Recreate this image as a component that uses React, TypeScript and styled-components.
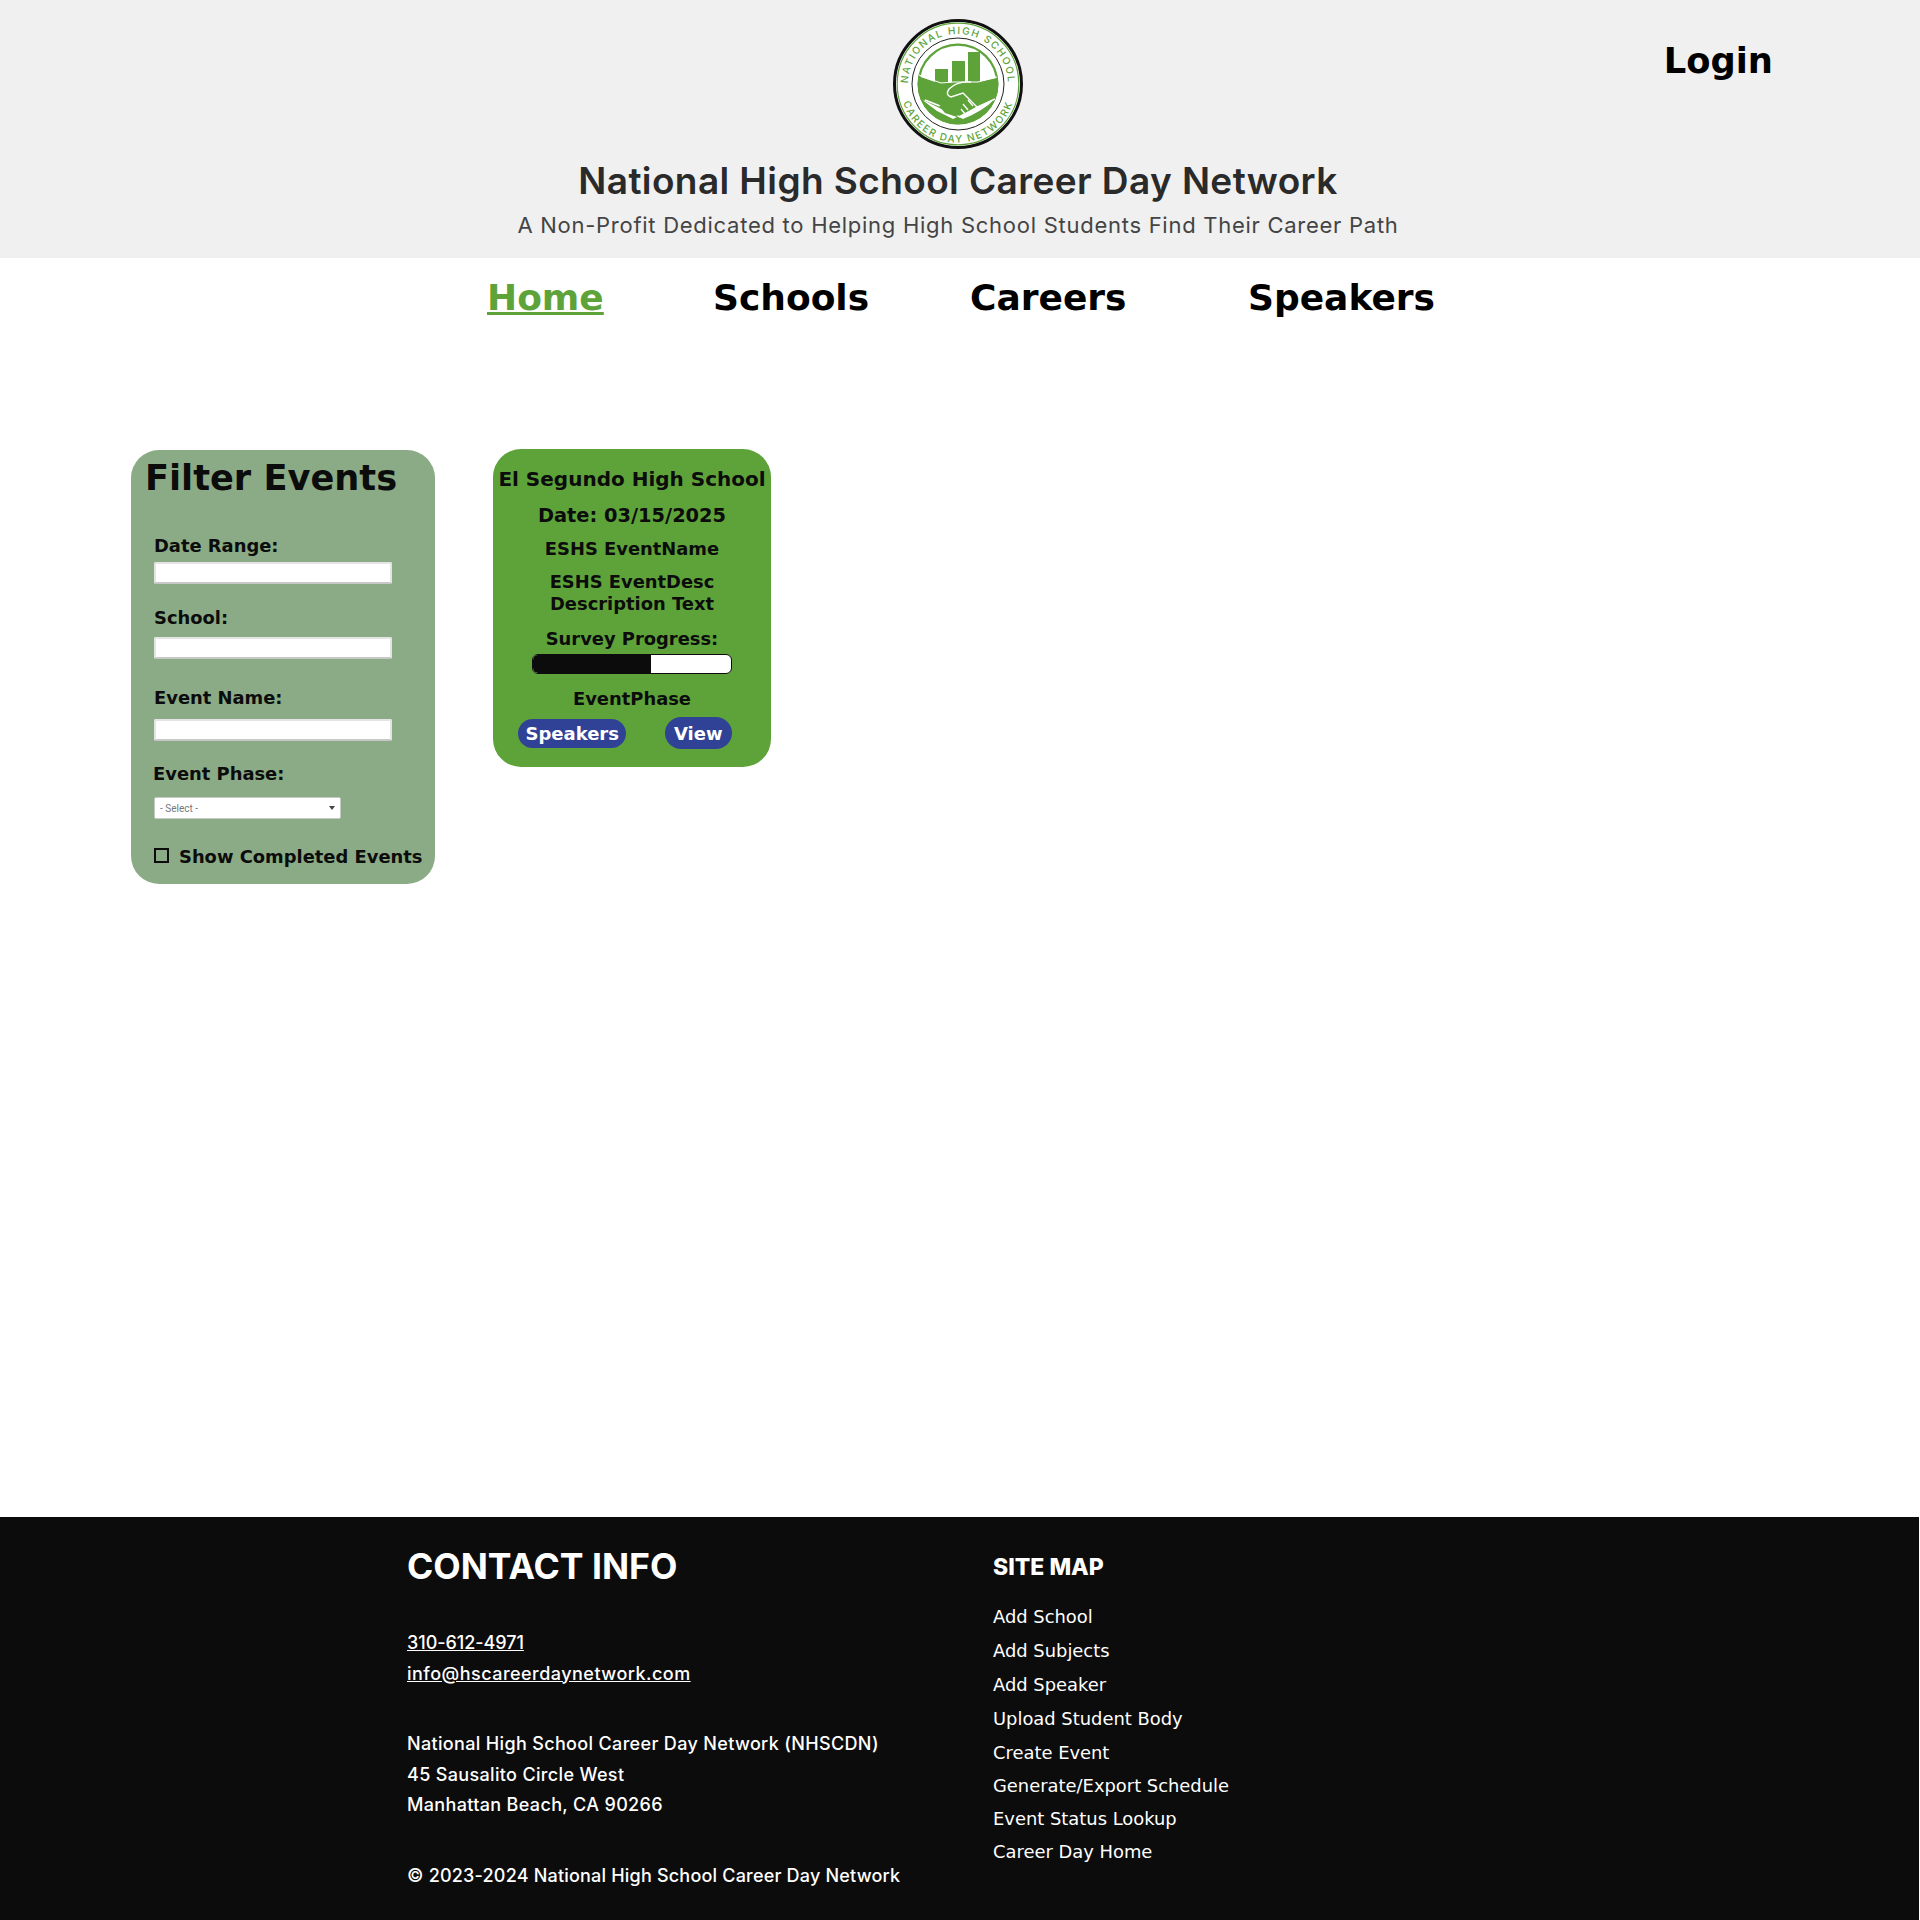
import React from 'react';
import styled, { createGlobalStyle } from 'styled-components';

const Colors = {
  ink: '#0c0c0c',
  green: '#5ea33a',
  sage: '#8aab85',
  blue: '#304295',
  header: '#f0f0f0',
};

const display = '"DejaVu Sans", sans-serif';
const footerFont = 'Inter, "Noto Sans", sans-serif';

const GlobalStyle = createGlobalStyle`
  html, body {
    margin: 0;
    padding: 0;
    background: #fff;
  }
`;

const Page = styled.div`
  display: flex;
  flex-direction: column;
  height: 1920px;
  font-family: ${display};
`;

const Header = styled.header`
  display: grid;
  grid-template-columns: 1fr auto 1fr;
  height: 258px;
  box-sizing: border-box;
  padding: 19px 4px 0 0;
  background: ${Colors.header};
`;

const Brand = styled.div`
  grid-column: 2;
  display: flex;
  flex-direction: column;
  align-items: center;
  color: #2a2a2a;
  font-family: ${footerFont};
`;

const BrandTitle = styled.div`
  margin-top: 9px;
  font-size: 37px;
  line-height: 46px;
  font-weight: 600;
  letter-spacing: 0.4px;
  white-space: nowrap;
`;

const BrandTagline = styled.div`
  margin-top: 6px;
  font-size: 22px;
  line-height: 30px;
  color: #444;
  letter-spacing: 0.73px;
  white-space: nowrap;
`;

const LoginLink = styled.a`
  justify-self: end;
  margin: 20px 143px 0 0;
  font-size: 35.3px;
  line-height: 44px;
  font-weight: 700;
  color: #000;
`;

const Nav = styled.nav`
  display: grid;
  grid-template-columns: 226px 257px 278px auto;
  padding: 18px 0 0 487px;
`;

const NavLink = styled.a<{ $active?: boolean }>`
  font-size: 36px;
  line-height: 44px;
  font-weight: 700;
  color: ${(p) => (p.$active ? Colors.green : '#000')};
  text-decoration: ${(p) => (p.$active ? 'underline' : 'none')};
`;

const Main = styled.main`
  display: flex;
  align-items: flex-start;
  gap: 58px;
  padding: 130px 0 0 131px;
  color: ${Colors.ink};
`;

const FilterPanel = styled.aside`
  width: 304px;
  height: 434px;
  box-sizing: border-box;
  padding: 7px 0 0 14px;
  border-radius: 28px;
  background: ${Colors.sage};
`;

const FilterTitle = styled.h2`
  margin: 0 0 37px;
  font-size: 35.2px;
  line-height: 42px;
  font-weight: 700;
`;

const Field = styled.div<{ $top: number; $gap: number; $indent?: number }>`
  display: flex;
  flex-direction: column;
  align-items: flex-start;
  gap: ${(p) => p.$gap}px;
  margin: ${(p) => p.$top}px 0 0 ${(p) => p.$indent ?? 9}px;
`;

const FieldLabel = styled.label`
  font-size: 17.9px;
  line-height: 20px;
  font-weight: 700;
`;

const TextInput = styled.input`
  display: block;
  width: 238px;
  height: 22px;
  box-sizing: border-box;
  padding: 0;
  border: 2px solid #e4e4e4;
  border-bottom-color: #c8c8c8;
  border-radius: 2px;
  background: #fff;
`;

const SelectBox = styled.div`
  display: flex;
  align-items: center;
  justify-content: space-between;
  width: 187px;
  height: 22px;
  margin-left: 1px;
  box-sizing: border-box;
  padding: 0 5px;
  border: 1px solid #c8c8c8;
  border-radius: 2px;
  background: #fff;
  color: #777;
  font-family: Roboto, sans-serif;
  font-size: 10px;

  &::after {
    content: '';
    border-left: 3px solid transparent;
    border-right: 3px solid transparent;
    border-top: 4px solid #444;
  }
`;

const CheckRow = styled.div`
  display: flex;
  align-items: center;
  gap: 10px;
  margin: 28px 0 0 9px;
  font-size: 17.9px;
  line-height: 20px;
  font-weight: 700;
  white-space: nowrap;
`;

const CheckBox = styled.span`
  width: 15px;
  height: 15px;
  margin-bottom: 3px;
  box-sizing: border-box;
  border: 2px solid ${Colors.ink};
`;

const EventCard = styled.article`
  display: flex;
  flex-direction: column;
  align-items: center;
  width: 278px;
  height: 318px;
  box-sizing: border-box;
  margin-top: -1px;
  padding-top: 16px;
  border-radius: 28px;
  background: ${Colors.green};
  text-align: center;
  font-weight: 700;
`;

const CardTitle = styled.h3`
  margin: 0;
  font-size: 20px;
  line-height: 28px;
  font-weight: 700;
  white-space: nowrap;
`;

const CardLine = styled.div<{ $top: number; $size?: number }>`
  margin-top: ${(p) => p.$top}px;
  font-size: ${(p) => p.$size || 17.9}px;
  line-height: 22px;
`;

const ProgressTrack = styled.div`
  width: 200px;
  height: 20px;
  box-sizing: border-box;
  margin-top: 4px;
  overflow: hidden;
  border: 1px solid ${Colors.ink};
  border-radius: 6px;
  background: #fff;
`;

const ProgressFill = styled.div`
  height: 100%;
  background: ${Colors.ink};
`;

const CardActions = styled.div`
  display: flex;
  align-items: center;
  gap: 39px;
  margin: 7px 14px 0 0;
`;

const PillButton = styled.button<{ $tall?: boolean }>`
  height: ${(p) => (p.$tall ? 32 : 29)}px;
  padding: 0 ${(p) => (p.$tall ? 9 : 7)}px;
  border: 0;
  border-radius: 16px;
  background: ${Colors.blue};
  color: #fff;
  font-family: ${display};
  font-size: 18px;
  font-weight: 700;
`;

const Footer = styled.footer`
  display: grid;
  grid-template-columns: 586px auto;
  height: 403px;
  box-sizing: border-box;
  margin: auto 1px 0 0;
  padding: 20px 0 0 407px;
  background: ${Colors.ink};
  color: #fff;
  font-family: ${footerFont};
`;

const ContactTitle = styled.h2`
  margin: 0;
  font-size: 35.6px;
  line-height: 60px;
  font-weight: 700;
`;

const ContactBlock = styled.div<{ $top: number; $spacing?: number }>`
  margin-top: ${(p) => p.$top}px;
  font-size: 18px;
  line-height: 30.5px;
  font-weight: 500;
  letter-spacing: ${(p) => p.$spacing ?? 0.34}px;
  white-space: nowrap;
`;

const ContactLink = styled.a<{ $spacing: number }>`
  display: block;
  color: #fff;
  letter-spacing: ${(p) => p.$spacing}px;
  text-decoration: underline;
`;

const SiteTitle = styled.h3`
  margin: 0 0 2px;
  font-size: 23px;
  line-height: 60px;
  font-weight: 800;
`;

const SiteList = styled.ul`
  margin: 0;
  padding: 0;
  list-style: none;
  font-family: ${display};
  font-size: 17.9px;
`;

const SiteItem = styled.li<{ $height: number }>`
  line-height: ${(p) => p.$height}px;
`;

const Logo = () => (
  <svg width="130" height="130" viewBox="0 0 130 130" role="img" aria-label="National High School Career Day Network">
    <defs>
      <path id="logo-top" d="M 15 65 A 50 50 0 0 1 115 65" />
      <path id="logo-bottom" d="M 7.5 66 A 57.5 57.5 0 0 0 122.5 66" />
      <clipPath id="logo-disk">
        <circle cx="65" cy="65" r="40.5" />
      </clipPath>
    </defs>
    <circle cx="65" cy="65" r="63.5" fill="#fff" stroke="#111" strokeWidth="3" />
    <circle cx="65" cy="65" r="60.8" fill="none" stroke="#5ea33a" strokeWidth="1.2" />
    <circle cx="65" cy="65" r="46" fill="none" stroke="#222" strokeWidth="1" />
    <g fill="#5ea33a" fontFamily="Inter, sans-serif" fontSize="10" fontWeight="500" letterSpacing="1.6">
      <text textAnchor="middle">
        <textPath href="#logo-top" startOffset="50%">NATIONAL HIGH SCHOOL</textPath>
      </text>
      <text textAnchor="middle">
        <textPath href="#logo-bottom" startOffset="50%">CAREER DAY NETWORK</textPath>
      </text>
    </g>
    <circle cx="65" cy="65" r="40.5" fill="#5ea33a" />
    <g clipPath="url(#logo-disk)">
      <path d="M 22 56 L 48 65 L 60 63 L 85 63 L 108 58 L 108 20 L 22 20 Z" fill="#fff" />
      <path d="M 28 80 Q 48 90 70 100 Q 90 92 102 80 L 76 92 L 60 100 L 44 92 Z" fill="#fff" />
      <circle cx="65" cy="65" r="39.5" fill="none" stroke="#5ea33a" strokeWidth="2.5" />
      <path d="M 42 50 H 55 V 66 H 42 Z M 59 42 H 72 V 66 H 59 Z M 75 33 H 87 V 66 H 75 Z" fill="#5ea33a" />
      <path d="M 26 56 L 48 64 L 60 63 L 85 63 L 104 58" fill="none" stroke="#fff" strokeWidth="1" />
      <path
        d="M 78 63 Q 64 62 56 70 Q 52 76 58 78 Q 64 76 70 74 L 84 88 M 32 81 L 47 87 L 67 98 L 84 88 L 102 80"
        fill="none"
        stroke="#fff"
        strokeWidth="1.4"
      />
      <path d="M 70 85 L 75 91 M 75 81 L 80 87 M 68 90 L 72 95" stroke="#fff" strokeWidth="1.3" />
      <path d="M 46 87 L 50 85 L 54 88 L 58 87 L 62 90 L 66 92 L 64 98 L 52 94 Z" fill="#5ea33a" />
    </g>
  </svg>
);

const siteLinks: [string, number][] = [
  ['Add School', 35],
  ['Add Subjects', 34],
  ['Add Speaker', 34],
  ['Upload Student Body', 34],
  ['Create Event', 33],
  ['Generate/Export Schedule', 33],
  ['Event Status Lookup', 33],
  ['Career Day Home', 34],
];

const App: React.FC = () => (
  <Page>
    <GlobalStyle />
    <Header>
      <Brand>
        <Logo />
        <BrandTitle>National High School Career Day Network</BrandTitle>
        <BrandTagline>A Non-Profit Dedicated to Helping High School Students Find Their Career Path</BrandTagline>
      </Brand>
      <LoginLink>Login</LoginLink>
    </Header>
    <Nav>
      <div><NavLink $active>Home</NavLink></div>
      <div><NavLink>Schools</NavLink></div>
      <div><NavLink>Careers</NavLink></div>
      <div><NavLink>Speakers</NavLink></div>
    </Nav>
    <Main>
      <FilterPanel>
        <FilterTitle>Filter Events</FilterTitle>
        <Field $top={0} $gap={6}>
          <FieldLabel>Date Range:</FieldLabel>
          <TextInput />
        </Field>
        <Field $top={24} $gap={9}>
          <FieldLabel>School:</FieldLabel>
          <TextInput />
        </Field>
        <Field $top={29} $gap={11}>
          <FieldLabel>Event Name:</FieldLabel>
          <TextInput />
        </Field>
        <Field $top={23} $gap={13} $indent={8}>
          <FieldLabel>Event Phase:</FieldLabel>
          <SelectBox>- Select -</SelectBox>
        </Field>
        <CheckRow>
          <CheckBox />
          Show Completed Events
        </CheckRow>
      </FilterPanel>
      <EventCard>
        <CardTitle>El Segundo High School</CardTitle>
        <CardLine $top={12} $size={19.4}>Date: 03/15/2025</CardLine>
        <CardLine $top={11}>ESHS EventName</CardLine>
        <CardLine $top={11}>
          ESHS EventDesc
          <br />
          Description Text
        </CardLine>
        <CardLine $top={13}>Survey Progress:</CardLine>
        <ProgressTrack>
          <ProgressFill style={{ width: '59.5%' }} />
        </ProgressTrack>
        <CardLine $top={14}>EventPhase</CardLine>
        <CardActions>
          <PillButton>Speakers</PillButton>
          <PillButton $tall>View</PillButton>
        </CardActions>
      </EventCard>
    </Main>
    <Footer>
      <div>
        <ContactTitle>CONTACT INFO</ContactTitle>
        <ContactBlock $top={31}>
          <ContactLink $spacing={-0.05}>310-612-4971</ContactLink>
          <ContactLink $spacing={0.48}>info@hscareerdaynetwork.com</ContactLink>
        </ContactBlock>
        <ContactBlock $top={40}>
          National High School Career Day Network (NHSCDN)
          <br />
          45 Sausalito Circle West
          <br />
          Manhattan Beach, CA 90266
        </ContactBlock>
        <ContactBlock $top={40} $spacing={0.2}>© 2023-2024 National High School Career Day Network</ContactBlock>
      </div>
      <div>
        <SiteTitle>SITE MAP</SiteTitle>
        <SiteList>
          {siteLinks.map(([label, height]) => (
            <SiteItem key={label} $height={height}>{label}</SiteItem>
          ))}
        </SiteList>
      </div>
    </Footer>
  </Page>
);

export default App;
